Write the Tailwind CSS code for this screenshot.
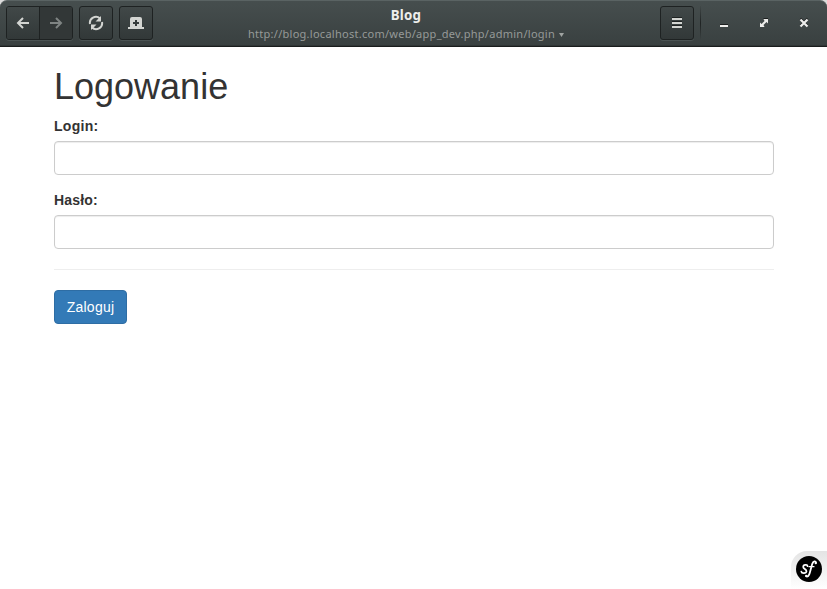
<!DOCTYPE html>
<html lang="pl">
<head>
<meta charset="utf-8">
<title>Blog</title>
<script src="https://cdn.jsdelivr.net/npm/@tailwindcss/browser@4"></script>
</head>
<body class="h-screen overflow-hidden bg-white font-['Liberation_Sans',sans-serif] text-sm leading-5 text-[#333]">
<div class="flex h-[589px] flex-col">
  <div class="bg-[#dcdcdc]">
  <header class="flex h-[47px] justify-between rounded-t-[7px] border-t border-b border-t-[#5a6363] border-b-[#1a1d1d] bg-linear-to-b from-[#464e4e] to-[#394040] pt-[5px] shadow-[inset_0_-1px_0_#303636]">
    <nav class="flex w-[227px] gap-1.5 pl-1.5">
      <div class="flex h-[34px] w-[67px] overflow-hidden rounded-[3px] border border-[#1e2222] shadow-[0_1px_0_#4b5353]">
        <button class="flex w-[33px] items-center justify-center border-r border-[#1e2222] bg-linear-to-b from-[#414848] to-[#323838]">
          <svg class="size-4" viewBox="0 0 16 16" fill="none" stroke="#d3d5d2" stroke-width="2"><path d="M14 8H3M8 3L3 8l5 5"/></svg>
        </button>
        <button class="flex w-8 items-center justify-center bg-[#323737]">
          <svg class="size-4" viewBox="0 0 16 16" fill="none" stroke="#7f8483" stroke-width="2"><path d="M2 8h11M8 3l5 5-5 5"/></svg>
        </button>
      </div>
      <button class="flex size-[34px] items-center justify-center rounded-[3px] border border-[#1e2222] bg-linear-to-b from-[#414848] to-[#323838] shadow-[0_1px_0_#4b5353]">
        <svg class="size-4" viewBox="0 0 16 16"><path d="M2 9A6 6 0 0 1 12 3.500M14 7A6 6 0 0 1 4 12.500" fill="none" stroke="#d3d5d2" stroke-width="2"/><path d="M13 1v5.500H7.500zM3 15V9.500h5.500z" fill="#d3d5d2"/></svg>
      </button>
      <button class="flex size-[34px] items-center justify-center rounded-[3px] border border-[#1e2222] bg-linear-to-b from-[#414848] to-[#323838] shadow-[0_1px_0_#4b5353]">
        <svg class="size-4" viewBox="0 0 16 16"><path d="M2 4q0-2 2-2h8q2 0 2 2v8h2v2H0v-2h2z" fill="#d3d5d2"/><path d="M8 5v6M5 8h6" stroke="#353b3b" stroke-width="2"/></svg>
      </button>
    </nav>
    <div class="flex flex-col items-center font-['Noto_Sans',sans-serif]">
      <div class="h-[19px] text-[13.3px] leading-[19px] font-bold tracking-[0.25px] text-[#eeeeec]"><span>Blog</span></div>
      <div class="flex h-[18px] items-center text-[11px] leading-[18px] text-[#969a98]"><span class="tracking-[0.27px]">http://blog.localhost.com/web/app_dev.php/admin/login</span>
        <svg class="mt-0.5 ml-1 h-1 w-[5px]" viewBox="0 0 5 4"><path d="M0 0h5L2.500 4z" fill="#a0a4a2"/></svg>
      </div>
    </div>
    <div class="flex w-[242px] justify-end">
      <button class="flex size-[34px] items-center justify-center rounded-[3px] border border-[#1e2222] bg-linear-to-b from-[#414848] to-[#323838] shadow-[0_1px_0_#4b5353]">
        <svg class="size-4" viewBox="0 0 16 16"><path d="M3 2.500h10M3 6.500h10M3 10.500h10" stroke="#1e2222"/><path d="M3 4h10M3 8h10M3 12h10" stroke="#d3d5d2" stroke-width="2"/></svg>
      </button>
      <div class="ml-1.5 h-[34px] w-px bg-linear-to-b from-[#414848] via-[#1f2323] to-[#3b4242]"></div>
      <div class="flex h-[34px] w-[126px] items-center gap-6 pl-[15px]">
        <svg class="size-4" viewBox="0 0 16 16"><path d="M4 9.500h8" stroke="#1c1f1f"/><path d="M4 11h8" stroke="#eeeeec" stroke-width="2"/></svg>
        <svg class="size-4" viewBox="0 0 16 16"><path d="M7 3h5v5l-1.500-1.500-4 4L8 12H4V8l1.500 1.500 4-4z" fill="#1c1f1f"/><path d="M7.500 4H12v4.500l-1.500-1.500-3 3L8.500 12H4V7.500L5.500 9l3-3z" fill="#eeeeec"/></svg>
        <svg class="size-4" viewBox="0 0 16 16" fill="none" stroke-width="2"><path d="M4.500 3.500l7 7M11.500 3.500l-7 7" stroke="#1c1f1f"/><path d="M4.500 4.500l7 7M11.500 4.500l-7 7" stroke="#eeeeec" stroke-width="2.200"/></svg>
      </div>
    </div>
  </header>
  </div>
  <main class="w-[774px] flex-1 pt-5 pl-[54px]">
    <h1 class="mb-2.5 h-[39px] text-[36px] leading-[39.6px] font-medium">Logowanie</h1>
    <form>
      <label class="mb-[5px] block font-bold tracking-[0.3px]" for="login">Login:</label>
      <input id="login" class="mb-[15px] block h-[34px] w-full rounded border border-[#ccc] px-3 shadow-[inset_0_1px_1px_rgba(0,0,0,0.075)]">
      <label class="mb-[5px] block font-bold tracking-[0.2px]" for="haslo">Hasło:</label>
      <input id="haslo" type="password" class="block h-[34px] w-full rounded border border-[#ccc] px-3 shadow-[inset_0_1px_1px_rgba(0,0,0,0.075)]">
      <hr class="my-5 border-[#eee]">
      <button type="button" class="block h-[34px] w-[73px] rounded border border-[#2e6da4] bg-[#337ab7] tracking-[0.25px] text-white">Zaloguj</button>
    </form>
  </main>
</div>
<div class="absolute right-0 bottom-0 h-[38px] w-9 rounded-tl-2xl bg-linear-to-b from-[#e4e4e4] to-white pt-[5px] pl-[5px]">
  <svg class="size-[26px]" viewBox="0 0 26 26"><circle cx="13" cy="13" r="13" fill="#000"/><g fill="none" stroke="#fff" stroke-linecap="round" stroke-linejoin="round"><path d="M11.500 10.200C11.500 8.200 7.200 8.300 7.200 10.900c0 2 3.600 2.300 3.300 4.500-.3 2.200-4.900 2.300-5.200.2" stroke-width="1.700"/><path d="M20 6.800C19.900 4.500 17.200 4.800 16.200 8l-2.400 8.700c-.8 3.200-2.300 4.300-3.700 3.600" stroke-width="1.800"/><path d="M13 10.700h5" stroke-width="1.200"/></g><circle cx="19.700" cy="7.200" r="1.100" fill="#fff"/><circle cx="10.200" cy="19.800" r="1.100" fill="#fff"/></svg>
</div>
</body>
</html>
